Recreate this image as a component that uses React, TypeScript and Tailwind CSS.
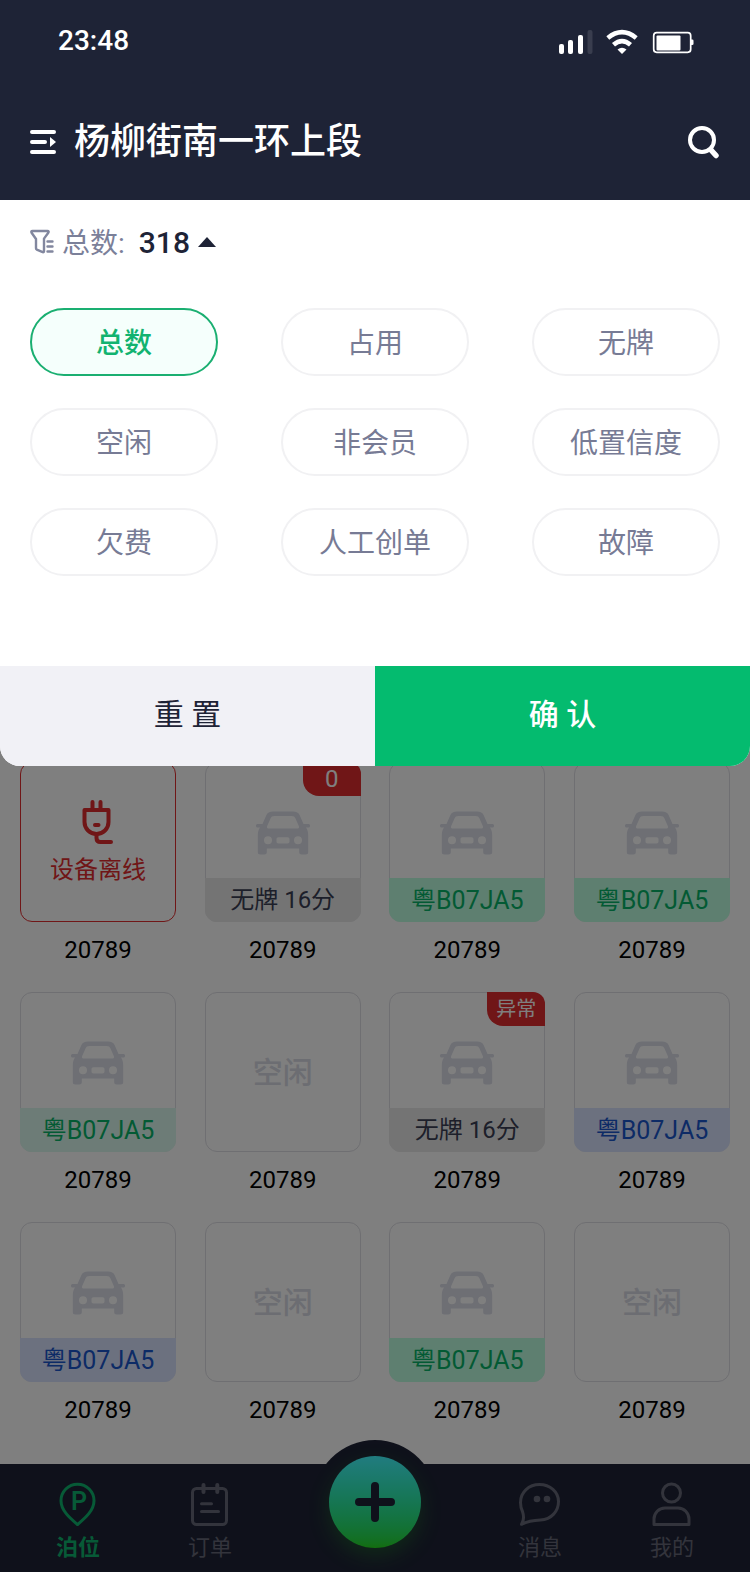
import { useState } from "react";
import type { ReactNode } from "react";

type Tone = "mint" | "pale" | "gray" | "blue";

type Berth =
  | { kind: "offline"; code: string }
  | { kind: "free"; code: string }
  | { kind: "car"; code: string; label: string; tone: Tone; count?: number; warning?: string };

const filters = [
  "总数",
  "占用",
  "无牌",
  "空闲",
  "非会员",
  "低置信度",
  "欠费",
  "人工创单",
  "故障",
];

const berths: Berth[] = [
  { kind: "offline", code: "20789" },
  { kind: "car", code: "20789", label: "无牌 16分", tone: "gray", count: 0 },
  { kind: "car", code: "20789", label: "粤B07JA5", tone: "mint" },
  { kind: "car", code: "20789", label: "粤B07JA5", tone: "mint" },
  { kind: "car", code: "20789", label: "粤B07JA5", tone: "pale" },
  { kind: "free", code: "20789" },
  { kind: "car", code: "20789", label: "无牌 16分", tone: "gray", warning: "异常" },
  { kind: "car", code: "20789", label: "粤B07JA5", tone: "blue" },
  { kind: "car", code: "20789", label: "粤B07JA5", tone: "blue" },
  { kind: "free", code: "20789" },
  { kind: "car", code: "20789", label: "粤B07JA5", tone: "mint" },
  { kind: "free", code: "20789" },
];

const toneClass: Record<Tone, string> = {
  mint: "bg-[#bcffe0] text-[25px] text-[#06b468]",
  pale: "bg-[#dbf9ee] text-[25px] text-[#06b468]",
  gray: "bg-[#e9e9e9] text-[24px] text-[#3a3e54]",
  blue: "bg-[#d9e3ff] text-[25px] text-[#1a56cc]",
};

function StatusIcons() {
  return (
    <svg width="136" height="26" viewBox="558 29 136 26" fill="none" aria-hidden="true">
      <g fill="#fff">
        <rect x="559" y="44" width="5" height="10" rx="2" />
        <rect x="568" y="40" width="5" height="14" rx="2" />
        <rect x="578" y="35" width="5" height="19" rx="2" />
        <rect x="587.500" y="30" width="5" height="24" rx="2" fillOpacity="0.12" />
        <path d="M617.500 49.500q4.500-3.400 9 0L622 54Z" />
        <rect x="656.500" y="35.500" width="24" height="15" rx="1" />
        <path d="M691 39.500h1.200q1.300 0 1.300 1.300v2.900q0 1.300-1.300 1.300H691Z" />
      </g>
      <path d="M607.800 38q14.200-11.600 28.400 0" stroke="#fff" strokeWidth="4.600" />
      <path d="M613.500 44.800q8.500-7.400 17 0" stroke="#fff" strokeWidth="4.600" />
      <rect x="653.700" y="32.700" width="37" height="19.600" rx="3" stroke="#fff" strokeWidth="1.700" />
    </svg>
  );
}

function MenuIcon() {
  return (
    <svg width="26" height="26" viewBox="0 0 26 26" aria-hidden="true">
      <path d="M2 3h22M2 13h13M2 23h22" stroke="#fff" strokeWidth="4" strokeLinecap="round" />
      <path d="M20 8l6 5-6 5Z" fill="#fff" />
    </svg>
  );
}

function SearchIcon() {
  return (
    <svg width="32" height="34" viewBox="0 0 32 34" fill="none" stroke="#fff" aria-hidden="true">
      <circle cx="14" cy="15" r="12" strokeWidth="4" />
      <path d="M23 25l5 5.500" strokeWidth="5.500" strokeLinecap="round" />
    </svg>
  );
}

function FunnelIcon() {
  return (
    <svg
      width="24"
      height="26"
      viewBox="0 0 24 26"
      fill="none"
      stroke="#82879f"
      strokeWidth="2.400"
      strokeLinejoin="round"
      strokeLinecap="round"
      aria-hidden="true"
    >
      <path d="M2.500 2h15q1.800 0 .800 1.700L14 9.600V22.200q0 1.300-1.300 1L6.800 20.600Q6 20.300 6 19.300V10L1.600 3.700Q.800 2 2.500 2Z" />
      <path d="M17.500 12.500h5M17.500 17.500h5M17.500 22.500h5" />
    </svg>
  );
}

function CarIcon() {
  return (
    <svg width="54" height="44" viewBox="0 0 54 44" fill="#dcdee9" aria-hidden="true">
      <path
        fillRule="evenodd"
        d="M17 0.500h20c3.500 0 5.500 1 6.800 4L47.500 13h5c1 0 1.500.7 1.500 1.800s-.5 1.800-1.500 1.800h-2.600c1.600 2 2.300 4.500 2.300 8V41c0 1.700-.8 2.500-2.500 2.500h-4c-1.700 0-2.500-.8-2.500-2.500v-3.500H10.800V41c0 1.700-.8 2.500-2.500 2.500h-4c-1.700 0-2.500-.8-2.500-2.500V24.600c0-3.500.7-6 2.300-8H1.500C.5 16.600 0 15.900 0 14.800S.5 13 1.500 13h5L10.200 4.500c1.300-3 3.300-4 6.800-4ZM18.500 5c-2.200 0-3.300.8-4 2.600l-3.300 7.400c-.7 1.700.1 2.600 2 2.600h27.600c1.900 0 2.700-.9 2-2.600L39.500 7.600c-.7-1.800-1.800-2.600-4-2.600ZM12 25.200a4 4 0 1 0 0 8a4 4 0 0 0 0-8ZM42 25.200a4 4 0 1 0 0 8a4 4 0 0 0 0-8ZM22.500 26.200c-1.300 0-2 .7-2 2v2.300c0 1.300.7 2 2 2h9c1.300 0 2-.7 2-2v-2.300c0-1.300-.7-2-2-2Z"
      />
    </svg>
  );
}

function PlugIcon() {
  return (
    <svg
      width="32"
      height="44"
      viewBox="0 0 32 44"
      fill="none"
      stroke="#e02c2e"
      strokeWidth="4"
      strokeLinecap="round"
      strokeLinejoin="round"
      aria-hidden="true"
    >
      <path d="M10.500 2v6M18.500 2v6" />
      <path d="M2.500 10h24V22a12 12 0 0 1-24 0Z" />
      <path d="M13 25h3.500" />
      <path d="M14.500 34v4q0 4 4 4h10.500" />
    </svg>
  );
}

function PinIcon() {
  return (
    <svg width="44" height="44" viewBox="0 0 44 44" fill="none" stroke="currentColor" strokeWidth="3" aria-hidden="true">
      <path strokeLinejoin="round" d="M21.500 42.500C15 37 5 29 5 18.700a16.500 16.500 0 0 1 33 0C38 29 28 37 21.500 42.500Z" />
      <text x="15" y="28" fontSize="25" fontWeight="600" fill="currentColor" stroke="none">
        P
      </text>
    </svg>
  );
}

function OrderIcon() {
  return (
    <svg width="44" height="44" viewBox="0 0 44 44" fill="none" stroke="currentColor" strokeWidth="3" strokeLinecap="round" aria-hidden="true">
      <rect x="4.500" y="6.500" width="34" height="36" rx="4" />
      <path d="M15.500 3v7M29.300 3v7" strokeWidth="4" />
      <path d="M13.500 21.700h10M13.500 29.500h17" />
    </svg>
  );
}

function ChatIcon() {
  return (
    <svg width="44" height="44" viewBox="0 0 44 44" fill="none" stroke="currentColor" strokeWidth="3" strokeLinejoin="round" aria-hidden="true">
      <path d="M3.500 42.300C6 38.500 6.500 35.500 4.500 29.500C2.800 26 2.500 23 2.500 20.500C2.500 10 11 2.500 21.500 2.500S40.500 10 40.500 19.500C40.500 29 33.500 37.500 22.500 38C15 38.300 9 39.500 3.500 42.300Z" />
      <circle cx="19" cy="17" r="3.300" fill="currentColor" stroke="none" />
      <circle cx="29" cy="17" r="3.300" fill="currentColor" stroke="none" />
    </svg>
  );
}

function UserIcon() {
  return (
    <svg width="44" height="44" viewBox="0 0 44 44" fill="none" stroke="currentColor" strokeWidth="3" strokeLinejoin="round" aria-hidden="true">
      <circle cx="21.500" cy="11" r="9" />
      <path d="M4 42.500V37a11 11 0 0 1 11-11h13a11 11 0 0 1 11 11v5.500Z" />
    </svg>
  );
}

function Badge({ children, numeric }: { children: ReactNode; numeric?: boolean }) {
  return (
    <span
      className={`absolute -top-px -right-px w-[58px] rounded-tr-xl rounded-bl-2xl bg-[#e02c2e] py-0.5 text-center leading-[30px] text-white ${
        numeric ? "text-2xl" : "text-xl"
      }`}
    >
      {children}
    </span>
  );
}

function BerthCard({ berth }: { berth: Berth }) {
  return (
    <li className="flex flex-col">
      <div
        className={`relative flex h-40 flex-col rounded-xl border bg-white ${
          berth.kind === "offline" ? "border-[#e02c2e]" : "border-[#dedee4]"
        }`}
      >
        {berth.kind === "offline" && (
          <div className="flex flex-1 flex-col items-center justify-center gap-2 pt-1 text-2xl leading-9 text-[#e02c2e]">
            <PlugIcon />
            设备离线
          </div>
        )}
        {berth.kind === "free" && (
          <div className="flex flex-1 items-center justify-center text-[30px] font-medium text-[#d8dae4]">空闲</div>
        )}
        {berth.kind === "car" && (
          <>
            <div className="flex flex-1 items-center justify-center pt-6">
              <CarIcon />
            </div>
            <div className={`-mx-px -mb-px rounded-b-xl pt-0.5 pb-px text-center leading-[41px] ${toneClass[berth.tone]}`}>
              {berth.label}
            </div>
            {berth.count !== undefined && <Badge numeric>{berth.count}</Badge>}
            {berth.warning && <Badge>{berth.warning}</Badge>}
          </>
        )}
      </div>
      <span className="mt-2.5 text-center text-2xl leading-9 text-black">{berth.code}</span>
    </li>
  );
}

function Tab({ icon, label, active }: { icon: ReactNode; label: string; active?: boolean }) {
  return (
    <a
      href="#"
      aria-current={active ? "page" : undefined}
      className={`flex w-33 flex-col items-center gap-1.5 pt-[18px] text-[22px] leading-8 ${
        active ? "font-bold text-[#0eb56e]" : "text-[#666878]"
      }`}
    >
      {icon}
      {label}
    </a>
  );
}

export default function App() {
  const [selected, setSelected] = useState("总数");

  return (
    <div className="flex min-h-screen flex-col bg-white font-[Roboto,'Noto_Sans_CJK_SC',sans-serif]">
      <header className="bg-[#1e2336] text-white">
        <div className="flex h-[84px] items-center justify-between pr-14 pl-[58px]">
          <span className="pb-0.5 text-[28px] leading-9 font-medium">23:48</span>
          <StatusIcons />
        </div>
        <div className="flex h-[116px] items-center gap-[18px] px-[30px]">
          <button type="button" aria-label="菜单">
            <MenuIcon />
          </button>
          <h1 className="flex-1 text-4xl font-medium">杨柳街南一环上段</h1>
          <button type="button" aria-label="搜索">
            <SearchIcon />
          </button>
        </div>
      </header>

      <div className="relative flex flex-1 flex-col">
        <section className="relative z-20 overflow-hidden rounded-b-[20px] bg-white">
          <button type="button" className="flex h-21 items-center px-[30px] text-[28px] text-[#7b8099]">
            <FunnelIcon />
            <span className="ml-2 pt-1">总数:</span>
            <span className="ml-3.5 text-[30px] font-medium text-[#1e2336]">318</span>
            <svg className="ml-2" width="18" height="10" viewBox="0 0 18 10" fill="#1e2336" aria-hidden="true">
              <path d="M9 0l9 10H0Z" />
            </svg>
          </button>
          <div className="grid grid-cols-[repeat(3,188px)] justify-between gap-y-8 px-[30px] pt-6 pb-[90px]">
            {filters.map((name) => (
              <button
                key={name}
                type="button"
                aria-pressed={selected === name}
                onClick={() => setSelected(name)}
                className={`h-17 rounded-full border-2 pt-1 text-[28px] ${
                  selected === name
                    ? "border-[#1aaf71] bg-[#f5fffc] font-medium text-[#12b370]"
                    : "border-[#f1f1f3] bg-white text-[#777b95]"
                }`}
              >
                {name}
              </button>
            ))}
          </div>
          <div className="grid h-25 grid-cols-2 text-[30px]">
            <button type="button" className="bg-[#f1f1f6] pb-1 text-[#1e2336]" onClick={() => setSelected("总数")}>
              重 置
            </button>
            <button type="button" className="bg-[#04bb6f] pb-1 font-medium text-white">
              确 认
            </button>
          </div>
        </section>

        <ul className="-mt-1 grid grid-cols-[repeat(4,156px)] justify-between gap-y-6 px-5 pb-9">
          {berths.map((berth, i) => (
            <BerthCard key={i} berth={berth} />
          ))}
        </ul>

        <nav className="relative mt-auto flex h-27 justify-between bg-[#1e2336] px-3">
          <div className="flex">
            <Tab icon={<PinIcon />} label="泊位" active />
            <Tab icon={<OrderIcon />} label="订单" />
          </div>
          <div className="flex">
            <Tab icon={<ChatIcon />} label="消息" />
            <Tab icon={<UserIcon />} label="我的" />
          </div>
          <div className="absolute -top-6 left-1/2 flex size-31 -translate-x-1/2 items-center justify-center rounded-full bg-[#1e2336]">
            <button
              type="button"
              aria-label="新增"
              className="flex size-23 items-center justify-center rounded-full bg-linear-to-b from-[#42f8ff] to-[#26dc1c] shadow-[0_8px_20px_rgba(40,220,40,0.25)]"
            >
              <svg width="40" height="40" viewBox="0 0 40 40" aria-hidden="true">
                <path d="M20 4v32M4 20h32" stroke="#1e2336" strokeWidth="8" strokeLinecap="round" />
              </svg>
            </button>
          </div>
        </nav>

        <div className="absolute inset-0 z-10 bg-black/50" />
      </div>
    </div>
  );
}
